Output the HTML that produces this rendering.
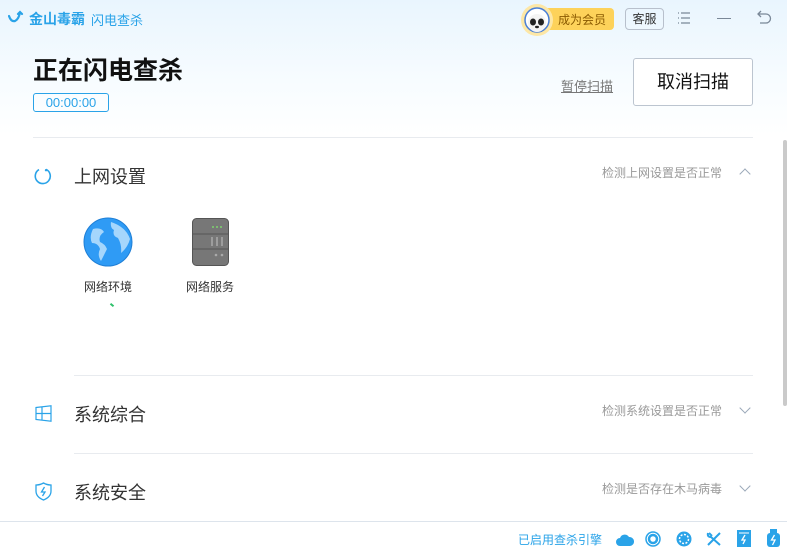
<!DOCTYPE html>
<html><head><meta charset="utf-8"><style>
*{margin:0;padding:0;box-sizing:border-box}
body{width:787px;height:554px;overflow:hidden;position:relative;background:#fff;font-family:"Liberation Sans","Noto Sans CJK SC",sans-serif;color:#222}
.top{position:absolute;left:0;top:0;width:787px;height:135px;background:linear-gradient(#e9f5fe,#f7fcff 60%,#fff)}
.a{position:absolute;white-space:nowrap}
.line{position:absolute;height:1px;background:#e8ebef}
.sec{font-size:18px;color:#333}
.desc{font-size:12px;color:#999}
.chev{position:absolute;width:8px;height:8px;border-left:1.3px solid #9aa8b8;border-top:1.3px solid #9aa8b8}
</style></head><body>
<div class="top"></div>
<svg class="a" style="left:8px;top:10px" width="16" height="16" viewBox="0 0 16 16"><path d="M1 6 Q3 12 7 11 Q11 9 12 2 M10 4 L12 2 L14 4" fill="none" stroke="#2aa3e8" stroke-width="2.2" stroke-linecap="round"/></svg>
<div class="a" style="left:29px;top:9px;font-size:14px;font-weight:bold;color:#2aa3e8">金山毒霸</div>
<div class="a" style="left:91px;top:10px;font-size:13px;color:#2aa3e8">闪电查杀</div>
<div class="a" style="left:530px;top:8px;width:84px;height:22px;background:#fdd25a;border-radius:4px"></div>
<div class="a" style="left:521px;top:4px;width:32px;height:32px;border-radius:50%;background:#fde7a6"></div>
<svg class="a" style="left:524px;top:7px" width="26" height="26" viewBox="0 0 26 26"><circle cx="13" cy="13" r="12" fill="#fff" stroke="#4a7fd6" stroke-width="1.5"/><circle cx="13" cy="16" r="9" fill="#f4f4f4"/><ellipse cx="9" cy="15" rx="3" ry="3.5" fill="#222"/><ellipse cx="17" cy="15" rx="3" ry="3.5" fill="#222"/><ellipse cx="13" cy="20" rx="2" ry="1.2" fill="#222"/></svg>
<div class="a" style="left:558px;top:11px;font-size:12px;color:#8a5a00">成为会员</div>
<div class="a" style="left:625px;top:8px;width:39px;height:22px;border:1px solid #b8c0cc;border-radius:4px;font-size:12px;line-height:20px;text-align:center;color:#333">客服</div>
<svg class="a" style="left:677px;top:11px" width="14" height="14" viewBox="0 0 14 14" stroke="#7a8898" stroke-width="1.2"><path d="M1 2h1M4 2h9M1 7h1M4 7h9M1 12h1M4 12h9"/></svg>
<div class="a" style="left:717px;top:18px;width:14px;height:1.3px;background:#7a8898"></div>
<svg class="a" style="left:757px;top:10px" width="15" height="14" viewBox="0 0 15 14"><path d="M4 1 L1 4 L4 7 M1 4 H9 A4.5 4.5 0 0 1 9 13 H3" fill="none" stroke="#7a8898" stroke-width="1.3"/></svg>
<div class="a" style="left:33px;top:51px;font-size:25px;font-weight:bold;color:#111">正在闪电查杀</div>
<div class="a" style="left:33px;top:93px;width:76px;height:19px;border:1.3px solid #2aa3e8;border-radius:3px;font-size:13px;line-height:17px;text-align:center;color:#2aa3e8">00:00:00</div>
<div class="a" style="left:561px;top:76px;font-size:13px;color:#777;text-decoration:underline">暂停扫描</div>
<div class="a" style="left:633px;top:58px;width:120px;height:48px;border:1px solid #bcc5d0;border-radius:3px;background:#fff;font-size:18px;line-height:46px;text-align:center;color:#111">取消扫描</div>
<div class="line" style="left:33px;top:137px;width:720px"></div>
<div class="a" style="left:783px;top:140px;width:4px;height:266px;background:#cacaca;border-radius:2px"></div>
<svg class="a" style="left:34px;top:167px" width="18" height="18" viewBox="0 0 18 18"><path d="M12 2.3 A7.5 7.5 0 1 1 5 2.6" fill="none" stroke="#2aa3e8" stroke-width="1.6"/><circle cx="12" cy="3.2" r="1.2" fill="#2aa3e8"/></svg>
<div class="a sec" style="left:74px;top:163px">上网设置</div>
<div class="a desc" style="left:602px;top:164px">检测上网设置是否正常</div>
<div class="chev" style="left:741px;top:170px;transform:rotate(45deg)"></div>
<svg class="a" style="left:83px;top:217px" width="50" height="50" viewBox="0 0 50 50"><circle cx="25" cy="25" r="24" fill="#2f9bf5" stroke="#1f7fd6" stroke-width="1"/><path d="M10 12 Q6 20 9 26 Q15 26 17 32 Q14 38 18 44 Q22 36 24 32 Q22 27 17 25 Q15 19 21 15 Q18 10 10 12Z M28 5 Q27 11 31 13 Q29 19 35 21 Q39 28 38 36 Q45 30 47 22 Q43 10 28 5Z" fill="#a5d6fc"/></svg>
<div class="a" style="left:84px;top:278px;font-size:12px;color:#333">网络环境</div>
<div class="a" style="left:110px;top:304px;width:4px;height:2px;background:#2ec06b;transform:rotate(40deg)"></div>
<svg class="a" style="left:192px;top:218px" width="37" height="48" viewBox="0 0 37 48"><rect x="0.5" y="0.5" width="36" height="47" rx="4" fill="#777" stroke="#555"/><path d="M0.5 16h36M0.5 31h36" stroke="#555"/><circle cx="21" cy="9" r="1" fill="#7ed36e"/><circle cx="25" cy="9" r="1" fill="#7ed36e"/><circle cx="29" cy="9" r="1" fill="#7ed36e"/><path d="M20 19v9M25 19v9M30 19v9" stroke="#aaa" stroke-width="1.5"/><circle cx="24" cy="37" r="1.3" fill="#aaa"/><circle cx="30" cy="37" r="1.3" fill="#aaa"/></svg>
<div class="a" style="left:186px;top:278px;font-size:12px;color:#333">网络服务</div>
<div class="line" style="left:74px;top:375px;width:679px"></div>
<svg class="a" style="left:35px;top:405px" width="17" height="17" viewBox="0 0 17 17" fill="none" stroke="#2aa3e8" stroke-width="1.2"><path d="M1 2.5 L16 0.8 V16.2 L1 14.5Z M1 8.5H16 M7 1.8V15.2"/></svg>
<div class="a sec" style="left:74px;top:401px">系统综合</div>
<div class="a desc" style="left:602px;top:402px">检测系统设置是否正常</div>
<div class="chev" style="left:741px;top:404px;transform:rotate(225deg)"></div>
<div class="line" style="left:74px;top:453px;width:679px"></div>
<svg class="a" style="left:35px;top:482px" width="17" height="19" viewBox="0 0 17 19" fill="none" stroke="#2aa3e8" stroke-width="1.3"><path d="M8.5 1 Q12 3 16 3 V9 Q16 15 8.5 18 Q1 15 1 9 V3 Q5 3 8.5 1Z M9.5 5 L6.5 10 H10 L7.5 14"/></svg>
<div class="a sec" style="left:74px;top:479px">系统安全</div>
<div class="a desc" style="left:602px;top:480px">检测是否存在木马病毒</div>
<div class="chev" style="left:741px;top:482px;transform:rotate(225deg)"></div>
<div class="line" style="left:0;top:521px;width:787px;background:#dde4ec"></div>
<div class="a" style="left:518px;top:531px;font-size:12px;color:#2aa3e8">已启用查杀引擎</div>
<svg class="a" style="left:616px;top:533px" width="18" height="14" viewBox="0 0 18 14"><path d="M4 13 A4 4 0 0 1 4 5 A5 5 0 0 1 13 4 A4.5 4.5 0 0 1 14 13Z" fill="#2aa3e8"/></svg>
<svg class="a" style="left:645px;top:531px" width="16" height="16" viewBox="0 0 16 16" fill="none" stroke="#2aa3e8"><circle cx="8" cy="8" r="7" stroke-width="1.5"/><circle cx="8" cy="8" r="4" stroke-width="2.5"/></svg>
<svg class="a" style="left:676px;top:531px" width="16" height="16" viewBox="0 0 16 16"><circle cx="8" cy="8" r="7.5" fill="#2aa3e8"/><circle cx="8" cy="8" r="4.5" fill="none" stroke="#fff" stroke-width="1.5" stroke-dasharray="2 1.5"/></svg>
<svg class="a" style="left:706px;top:531px" width="16" height="16" viewBox="0 0 16 16" fill="none" stroke="#2aa3e8" stroke-width="2"><path d="M2 14 L14 2 M2 2 Q1 6 5 6 L14 14 M3 2 L6 5"/></svg>
<svg class="a" style="left:737px;top:530px" width="14" height="17" viewBox="0 0 14 17"><rect width="14" height="17" fill="#2aa3e8"/><path d="M2 3h10" stroke="#fff"/><path d="M8 5 L5 10 H8 L6 14" fill="none" stroke="#fff" stroke-width="1.3"/></svg>
<svg class="a" style="left:767px;top:529px" width="13" height="18" viewBox="0 0 13 18"><rect x="3" y="0" width="7" height="5" fill="#2aa3e8"/><rect x="0" y="4" width="13" height="14" rx="3" fill="#2aa3e8"/><path d="M7.5 6 L4.5 11 H8 L5.5 16" fill="none" stroke="#fff" stroke-width="1.3"/></svg>
</body></html>
